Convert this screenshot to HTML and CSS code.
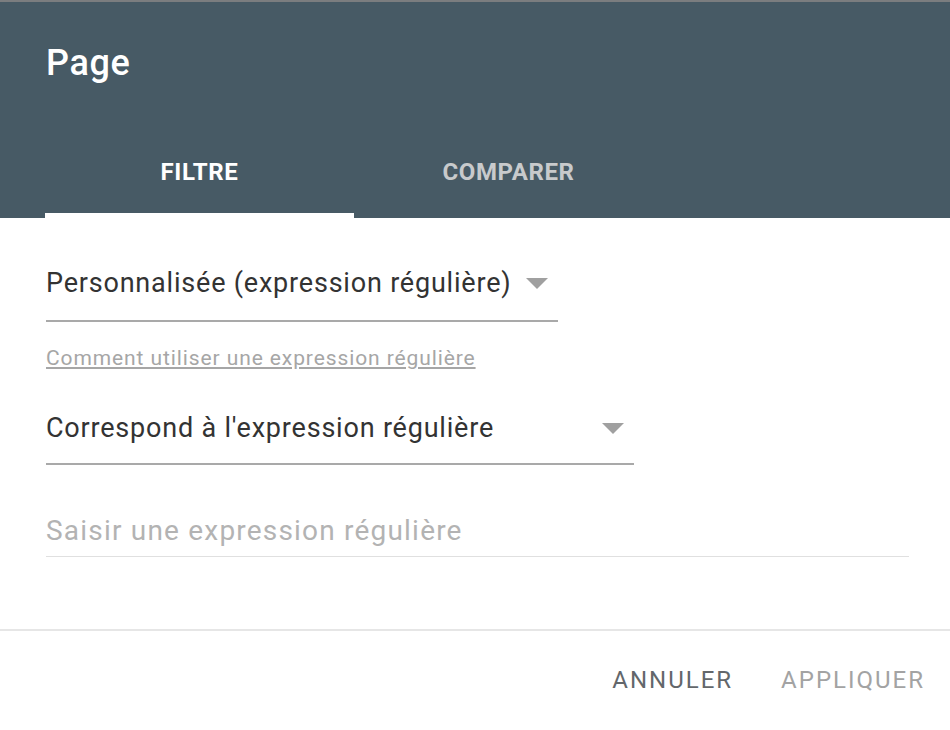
FILE: index.html
```html
<!DOCTYPE html>
<html lang="fr">
<head>
<meta charset="utf-8">
<title>Page</title>
<link rel="stylesheet" href="styles.css">
</head>
<body>
<div class="dialog">
  <header class="header">
    <h1 class="title">Page</h1>
    <nav class="tabs">
      <div class="tab active">FILTRE</div>
      <div class="tab">COMPARER</div>
    </nav>
  </header>
  <main class="content">
    <div class="select select-auto">
      <span class="select-text">Personnalisée (expression régulière)</span>
      <span class="arrow"></span>
    </div>
    <a class="help-link" href="#">Comment utiliser une expression régulière</a>
    <div class="select select-wide">
      <span class="select-text">Correspond à l'expression régulière</span>
      <span class="arrow"></span>
    </div>
    <div class="input">Saisir une expression régulière</div>
  </main>
  <footer class="actions">
    <span class="btn btn-cancel">ANNULER</span>
    <span class="btn btn-apply">APPLIQUER</span>
  </footer>
</div>
</body>
</html>
```
FILE: styles.css
```css
html, body {
  margin: 0;
  padding: 0;
  background: #ffffff;
}
body {
  font-family: Roboto, "Liberation Sans", Arial, sans-serif;
  width: 950px;
  height: 730px;
  overflow: hidden;
}
.dialog {
  display: flex;
  flex-direction: column;
}
.header {
  background: #475a65;
  border-top: 2px solid #7b7d7f;
  padding: 37px 0 0 45px;
}
.title {
  margin: 0 0 35px 1px;
  font-size: 36px;
  font-weight: 500;
  line-height: 48px;
  letter-spacing: 0.6px;
  color: #ffffff;
}
.tabs {
  display: flex;
}
.tab {
  width: 309px;
  text-align: center;
  font-size: 24px;
  font-weight: 700;
  line-height: 30px;
  letter-spacing: 0.6px;
  padding: 35px 0 26px 0;
  color: #c8cacc;
  border-bottom: 5px solid transparent;
}
.tab.active {
  color: #ffffff;
  border-bottom-color: #ffffff;
}
.content {
  display: flex;
  flex-direction: column;
  align-items: flex-start;
  padding: 47px 0 0 46px;
}
.select {
  display: flex;
  align-items: center;
  border-bottom: 2px solid #a9a9a9;
  padding-right: 10px;
  box-sizing: border-box;
}
.select-auto {
  padding-bottom: 19px;
}
.select-wide {
  width: 588px;
  justify-content: space-between;
  padding-bottom: 17px;
}
.select-text {
  font-size: 27px;
  line-height: 36px;
  letter-spacing: 0.8px;
  color: #333333;
}
.arrow {
  width: 0;
  height: 0;
  border-left: 11px solid transparent;
  border-right: 11px solid transparent;
  border-top: 11px solid #a0a0a0;
}
.select-auto .arrow {
  margin-left: 15px;
}
.help-link {
  margin-top: 24px;
  margin-bottom: 40px;
  font-size: 21px;
  line-height: 24px;
  letter-spacing: 0.9px;
  color: #a6a6a6;
  text-decoration: underline;
}
.input {
  margin-top: 48px;
  width: 863px;
  font-size: 28px;
  line-height: 36px;
  letter-spacing: 1.2px;
  color: #b3b3b3;
  padding-bottom: 7px;
  border-bottom: 1px solid #e0e0e0;
}
.actions {
  margin-top: 72px;
  border-top: 2px solid #e6e6e6;
  display: flex;
  justify-content: flex-end;
  gap: 48px;
  padding: 31px 25px 0 0;
}
.btn {
  font-size: 24px;
  font-weight: 400;
  line-height: 36px;
  letter-spacing: 2px;
}
.btn-cancel {
  color: #63676b;
}
.btn-apply {
  color: #a3a3a3;
}
```
